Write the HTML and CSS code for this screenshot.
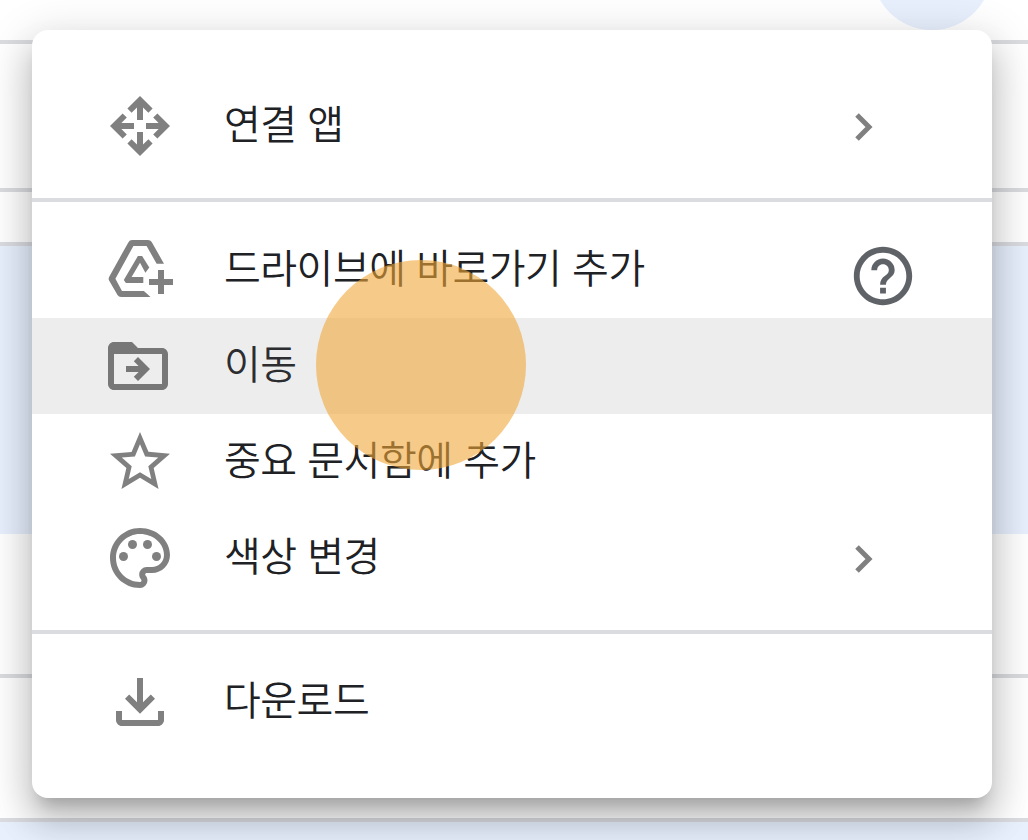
FILE: index.html
```html
<!DOCTYPE html>
<html lang="ko">
<head>
  <meta charset="UTF-8" />
  <meta name="viewport" content="width=device-width, initial-scale=1.0"/>
  <title>드라이브</title>
  <link rel="stylesheet" href="styles.css">
</head>
<body>

  <div class="page">
    <div class="avatar"></div>
    <div class="row row-top"></div>
    <div class="row row-title"></div>
    <div class="row row-head"></div>
    <div class="row row-selected"></div>
    <div class="row row-plain"></div>
    <div class="row row-file"></div>
    <div class="row row-last"></div>
  </div>

  <div class="menu">
    <div class="item">
      <svg class="icon" viewBox="0 0 24 24">
        <path d="M12 2L7.8 6.2l1.4 1.4L11 5.8V10h2V5.8l1.8 1.8 1.4-1.4z"/>
        <path d="M12 22l4.2-4.2-1.4-1.4-1.8 1.8V14h-2v4.2l-1.8-1.8-1.4 1.4z"/>
        <path d="M2 12l4.2 4.2 1.4-1.4L5.8 13H10v-2H5.8l1.8-1.8-1.4-1.4z"/>
        <path d="M22 12l-4.2-4.2-1.4 1.4 1.8 1.8H14v2h4.2l-1.8 1.8 1.4 1.4z"/>
      </svg>
      <span class="label">연결 앱</span>
      <svg class="arrow" viewBox="0 0 18 28"><path d="M2 2l12 12L2 26"/></svg>
    </div>

    <hr>

    <div class="item">
      <svg class="icon" viewBox="0 0 24 24">
        <path d="M20 9.9h-2.45L14.2 4H9.8L3.8 14.9 6 19h7.3l2.2 2H5.7Q4.9 21 4.5 20.3L1.7 15.5Q1.4 14.9 1.7 14.3L8.1 2.8Q8.5 2 9.4 2h5.2q.9 0 1.3.7z"/>
        <path d="M11.3 7.3h1.4l2.4 3.9-1.3 1.7L12 9.6l-2.8 4.7h3.9v2H7.3l-.7-1z"/>
        <path d="M18 12h2v3h3v2h-3v3h-2v-3h-3v-2h3z"/>
      </svg>
      <span class="label">드라이브에 바로가기 추가</span>
      <svg class="help" viewBox="0 0 24 24">
        <path d="M11 18h2v-2h-2v2zm1-16C6.48 2 2 6.48 2 12s4.48 10 10 10 10-4.48 10-10S17.52 2 12 2zm0 18c-4.41 0-8-3.59-8-8s3.59-8 8-8 8 3.59 8 8-3.59 8-8 8zm0-14c-2.21 0-4 1.79-4 4h2c0-1.1.9-2 2-2s2 .9 2 2c0 2-3 1.75-3 5h2c0-2.25 3-2.5 3-5 0-2.21-1.79-4-4-4z"/>
      </svg>
    </div>

    <div class="item active">
      <svg class="icon icon-folder" viewBox="0 0 24 24">
        <path fill-rule="evenodd" d="M20 6h-8l-2-2H4c-1.1 0-2 .9-2 2v12c0 1.1.9 2 2 2h16c1.1 0 2-.9 2-2V8c0-1.1-.9-2-2-2zm0 12H4V8h16z"/>
        <path d="M12 9l-1.4 1.4 1.6 1.6H8v2h4.2l-1.6 1.6L12 17l4-4z"/>
      </svg>
      <span class="label">이동</span>
    </div>

    <div class="item">
      <svg class="icon" viewBox="0 0 24 24">
        <path d="M22 9.24l-7.19-.62L12 2 9.19 8.63 2 9.24l5.46 4.73L5.82 21 12 17.27 18.18 21l-1.63-7.03L22 9.24zM12 15.4l-3.76 2.27 1-4.28-3.32-2.88 4.38-.38L12 6.1l1.71 4.04 4.38.38-3.32 2.88 1 4.28L12 15.4z"/>
      </svg>
      <span class="label">중요 문서함에 추가</span>
    </div>

    <div class="item">
      <svg class="icon" viewBox="0 0 24 24">
        <path d="M12 22C6.49 22 2 17.51 2 12S6.49 2 12 2s10 4.04 10 9c0 3.31-2.69 6-6 6h-1.77c-.28 0-.5.22-.5.5 0 .12.05.23.13.33.41.47.64 1.06.64 1.67A2.5 2.5 0 0 1 12 22zm0-18c-4.41 0-8 3.59-8 8s3.59 8 8 8c.28 0 .5-.22.5-.5a.54.54 0 0 0-.14-.35c-.41-.46-.63-1.05-.63-1.65a2.5 2.5 0 0 1 2.5-2.5H16c2.21 0 4-1.79 4-4 0-3.86-3.59-7-8-7z"/>
        <circle cx="6.5" cy="11.5" r="1.5"/>
        <circle cx="9.5" cy="7.5" r="1.5"/>
        <circle cx="14.5" cy="7.5" r="1.5"/>
        <circle cx="17.5" cy="11.5" r="1.5"/>
      </svg>
      <span class="label">색상 변경</span>
      <svg class="arrow" viewBox="0 0 18 28"><path d="M2 2l12 12L2 26"/></svg>
    </div>

    <hr>

    <div class="item">
      <svg class="icon" viewBox="0 0 24 24">
        <path d="M12 15.9l-5-5 1.4-1.4 2.6 2.6V4h2v8.1l2.6-2.6 1.4 1.4z"/>
        <path d="M4 15v3c0 1.1.9 2 2 2h12c1.1 0 2-.9 2-2v-3h-2v3H6v-3z"/>
      </svg>
      <span class="label">다운로드</span>
    </div>

    <div class="tap"></div>
  </div>

</body>
</html>
```

FILE: styles.css
```css
* { box-sizing: border-box; }
body { margin: 0; height: 840px; overflow: hidden; position: relative; background: #fff; font-family: "Noto Sans CJK KR", "Noto Sans", sans-serif; color: #202124; }

/* drive list behind the menu */
.page { position: relative; height: 840px; overflow: hidden; }
.avatar { position: absolute; top: -90px; left: 872px; width: 120px; height: 120px; border-radius: 50%; background: #e8f0fe; }
.row { border-bottom: 4px solid #dadce0; }
.row-top { height: 44px; }
.row-title { height: 148px; }
.row-head { height: 54px; }
.row-selected { height: 288px; background: #e8f0fe; border-bottom: none; }
.row-plain { height: 144px; }
.row-file { height: 144px; }
.row-last { height: 18px; background: #e8f0fe; border-bottom: none; }

/* menu */
.menu { position: absolute; top: 30px; left: 32px; width: 960px; height: 768px; padding: 48px 0; background: #fff; border-radius: 16px; box-shadow: 0 14px 16px -8px rgba(0,0,0,0.2), 0 24px 34px 4px rgba(0,0,0,0.14), 0 10px 44px 8px rgba(0,0,0,0.12); }
.menu hr { height: 4px; margin: 24px 0 20px; border: none; background: #dadce0; }
.item { display: flex; align-items: center; height: 96px; padding: 0 80px 0 72px; }
.item.active { background: #ededed; color: #2c2d30; }
.icon { width: 72px; height: 72px; fill: #808080; flex: none; }
.icon-folder { margin: -1px 2px 0 -2px; fill: #777; }
.label { margin-left: 48px; padding-bottom: 8px; font-size: 40px; font-weight: 350; line-height: 60px; letter-spacing: -0.5px; white-space: nowrap; }
.arrow { width: 18px; height: 28px; margin: 2px 39px 0 auto; fill: none; stroke: #808080; stroke-width: 5; }
.help { width: 70px; height: 70px; margin: 12px -6px 0 auto; fill: #5f6368; }

.tap { position: absolute; top: 230px; left: 284px; width: 210px; height: 210px; border-radius: 50%; background: rgba(240,167,57,0.6); }
```
